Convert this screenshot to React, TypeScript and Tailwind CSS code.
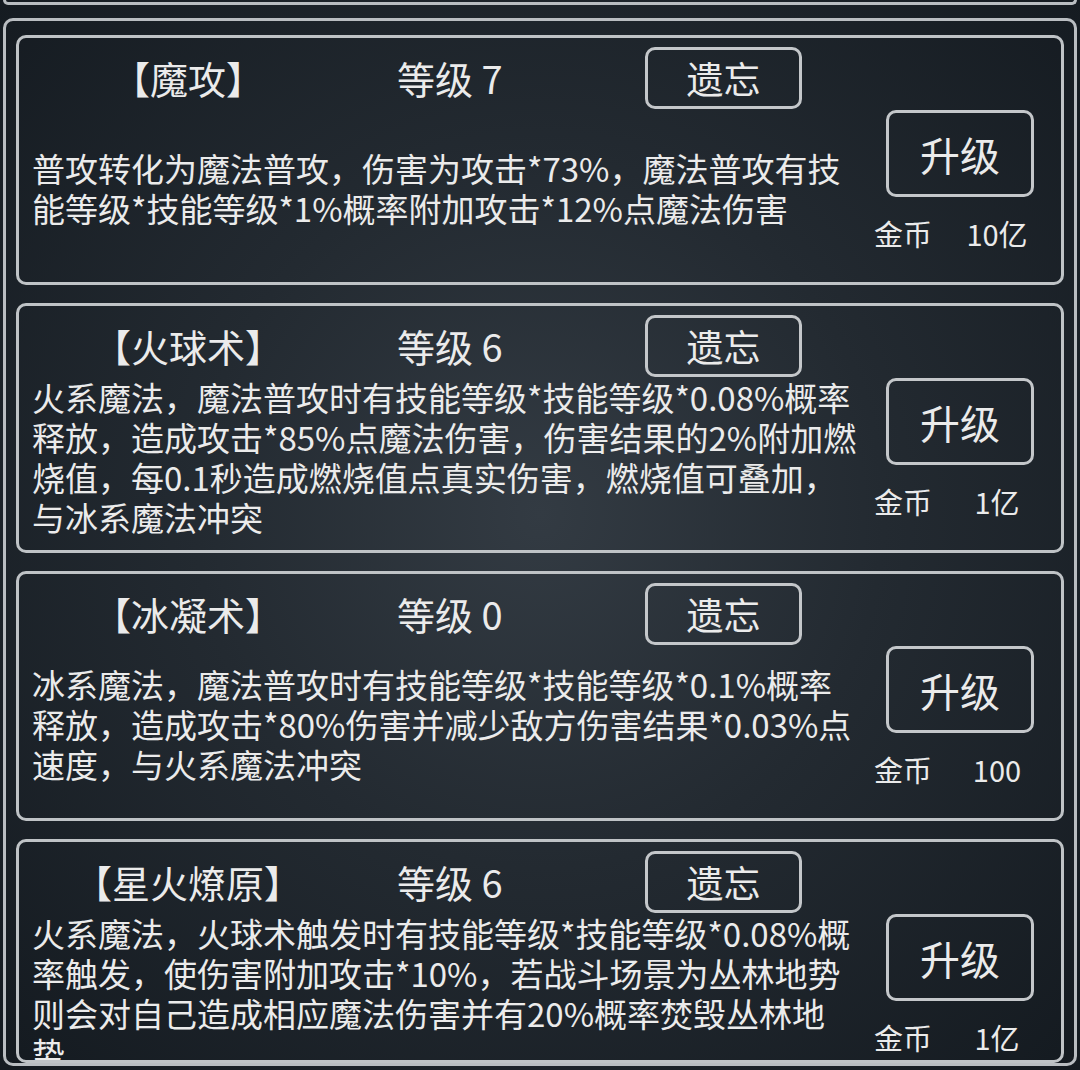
const SKILLS = [
  {
    name: "【魔攻】",
    level: 7,
    cost: "10亿",
    lines: [
      "普攻转化为魔法普攻，伤害为攻击*73%，魔法普攻有技",
      "能等级*技能等级*1%概率附加攻击*12%点魔法伤害",
    ],
  },
  {
    name: "【火球术】",
    level: 6,
    cost: "1亿",
    lines: [
      "火系魔法，魔法普攻时有技能等级*技能等级*0.08%概率",
      "释放，造成攻击*85%点魔法伤害，伤害结果的2%附加燃",
      "烧值，每0.1秒造成燃烧值点真实伤害，燃烧值可叠加，",
      "与冰系魔法冲突",
    ],
  },
  {
    name: "【冰凝术】",
    level: 0,
    cost: "100",
    lines: [
      "冰系魔法，魔法普攻时有技能等级*技能等级*0.1%概率",
      "释放，造成攻击*80%伤害并减少敌方伤害结果*0.03%点",
      "速度，与火系魔法冲突",
    ],
  },
  {
    name: "【星火燎原】",
    level: 6,
    cost: "1亿",
    lines: [
      "火系魔法，火球术触发时有技能等级*技能等级*0.08%概",
      "率触发，使伤害附加攻击*10%，若战斗场景为丛林地势",
      "则会对自己造成相应魔法伤害并有20%概率焚毁丛林地",
      "势",
    ],
  },
];

type Skill = (typeof SKILLS)[number];

function SkillCard({ skill, last }: { skill: Skill; last?: boolean }) {
  return (
    <div
      className={`shrink-0 overflow-hidden rounded-[10px] border-[3px] border-[#bfc3c6] ${
        last ? "h-[224px]" : "h-[250px]"
      }`}
    >
      <div className="flex h-[244px]">
        {/* left: header + description */}
        <div className="flex w-[851px] flex-col">
          <div className="mt-[9px] flex h-[62px] items-center">
            <div className="w-[338px] text-center text-[38px] leading-none">{skill.name}</div>
            <div className="ml-[40px] w-[248px] text-[38px] leading-none">等级 {skill.level}</div>
            <button className="flex h-[62px] w-[157px] items-center justify-center rounded-[10px] border-[3px] border-[#c4c7ca] text-[37px] leading-none">
              遗忘
            </button>
          </div>
          <div className="flex flex-1 items-center pb-[16px] pl-[13px]">
            <div className="text-[33px] leading-[40px] whitespace-nowrap">
              {skill.lines.map((l, i) => (
                <div key={i}>{l}</div>
              ))}
            </div>
          </div>
        </div>

        {/* right: upgrade + cost */}
        <div className="w-[190px] pt-[72px]">
          <button className="ml-[16px] flex h-[87px] w-[148px] items-center justify-center rounded-[10px] border-[3px] border-[#c4c7ca] text-[40px] leading-none">
            升级
          </button>
          <div className="mt-[16px] flex h-[40px] items-center whitespace-nowrap text-[29px] leading-none">
            <span className="ml-[2px] w-[62px] text-center">金币</span>
            <span className="w-[126px] text-center">{skill.cost}</span>
          </div>
        </div>
      </div>
    </div>
  );
}

export default function App() {
  return (
    <div
      className="h-[1070px] w-[1080px] overflow-hidden bg-[radial-gradient(ellipse_at_50%_48%,#333b43_0%,#232a31_45%,#141a20_100%)] text-[#ebebeb]"
      style={{ fontFamily: '"Noto Sans CJK SC", "Noto Sans", sans-serif' }}
    >
      <div className="mx-[3px] h-[5px] rounded-b-[10px] border-x-[3px] border-b-[3px] border-[#b9bdc1]" />
      <div className="mx-[3px] mt-[13px] flex h-[1048px] flex-col gap-[18px] overflow-hidden rounded-[10px] border-[3px] border-[#b9bdc1] px-[10px] pt-[14px]">
        {SKILLS.map((s, i) => (
          <SkillCard key={s.name} skill={s} last={i === SKILLS.length - 1} />
        ))}
      </div>
    </div>
  );
}
